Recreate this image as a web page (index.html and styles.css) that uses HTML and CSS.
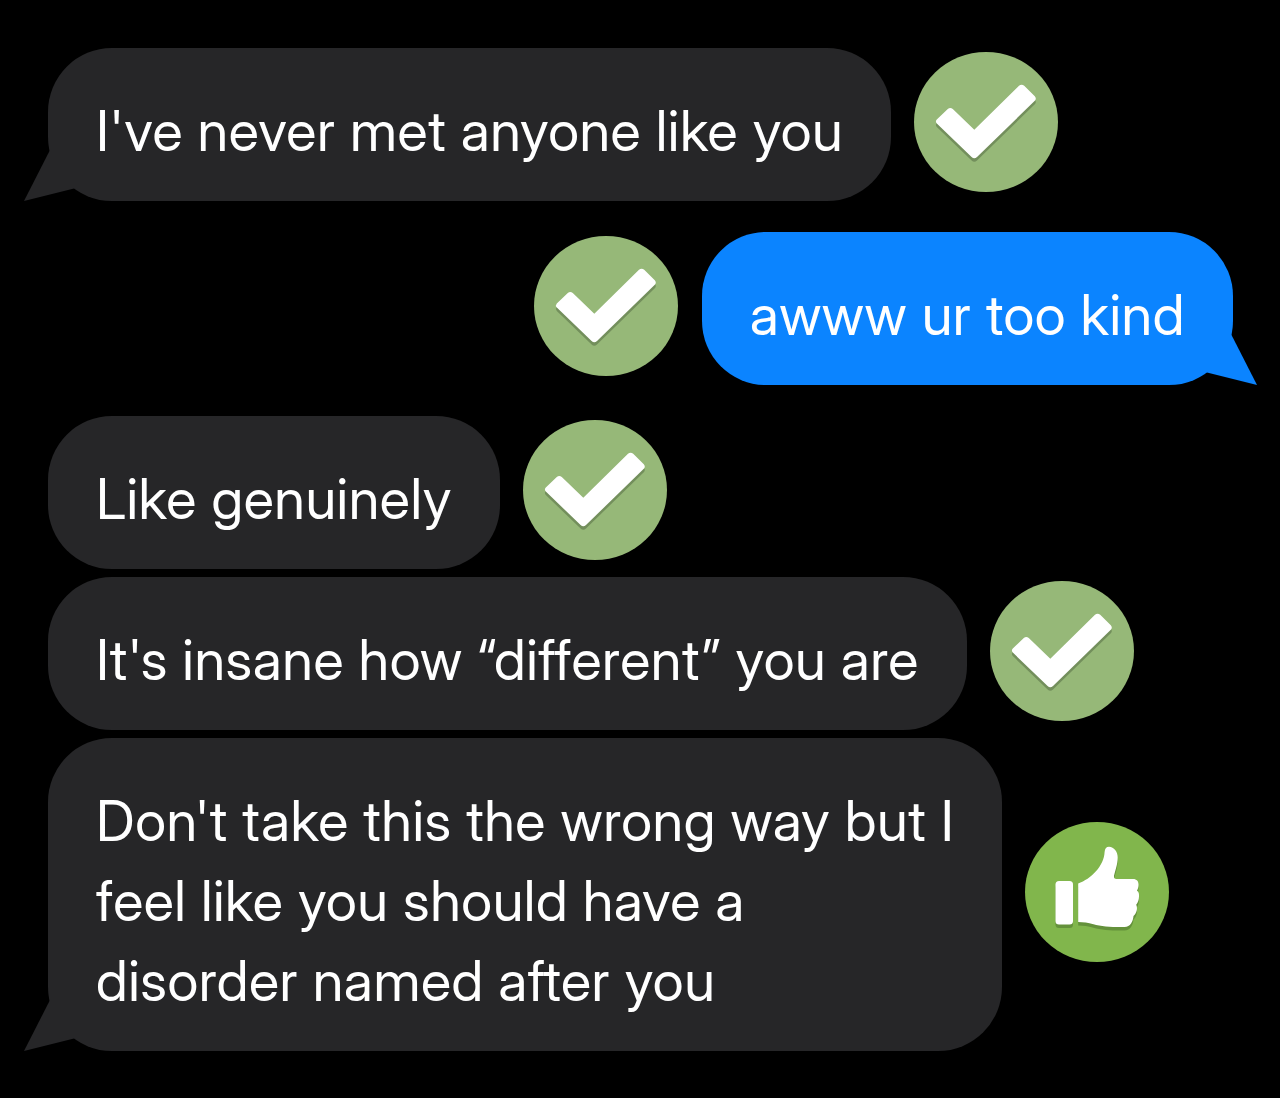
FILE: index.html
```
<!DOCTYPE html>
<html lang="en">
<head>
    <meta charset="UTF-8">
    <title>Messages</title>

    <link rel="stylesheet" href="styles.css">
</head>
<body>
    <!-- shared badge shapes -->
    <svg class="defs" width="0" height="0">
        <symbol id="best" viewBox="0 0 144 140">
            <ellipse cx="72" cy="70" rx="72" ry="70" fill="#96b878"></ellipse>
            <path fill="#738f5c" transform="translate(0,3.5)" d="M22.8,67.6 L33.8,57 Q36.2,55 38.8,57 L60.3,77.8 L105,33.8 Q107.6,31.8 110.2,33.8 L120.8,44.2 Q122.8,46.5 120.8,48.8 L63,105 Q60.3,107.4 57.6,105 L22.8,71.6 Q21,69.6 22.8,67.6Z"></path>
            <path fill="#fff" d="M22.8,67.6 L33.8,57 Q36.2,55 38.8,57 L60.3,77.8 L105,33.8 Q107.6,31.8 110.2,33.8 L120.8,44.2 Q122.8,46.5 120.8,48.8 L63,105 Q60.3,107.4 57.6,105 L22.8,71.6 Q21,69.6 22.8,67.6Z"></path>
        </symbol>
        <symbol id="excellent" viewBox="0 0 144 140">
            <ellipse cx="72" cy="70" rx="72" ry="70" fill="#81b64c"></ellipse>
            <g fill="#64913b" transform="translate(0,3.5)">
                <rect x="30.5" y="59" width="17.5" height="43.5" rx="3.5"></rect>
                <path d="M53.2,61.5 C66,57 79,44 79.6,30 C79.8,26.5 81.5,24.8 84,24.8 C89,25 92.7,29.5 92.7,35.5 C92.7,42 90.2,49 89,53.8 C88.7,56 89.6,57 91.5,57 L108,57 C111.8,57 113.5,59.3 113.5,62.5 C113.5,65 113,66.7 112,68.5 C113.8,70 114.2,71.8 114,74.5 C113.9,78 113,80.5 111.2,82.8 C113,86.5 111.5,91.5 108.5,94 C108,99.5 105.5,104.8 99.5,105 C88,105.2 76,104.5 68.5,102.2 C63,100.8 58.5,100 53.2,100Z"></path>
            </g>
            <g fill="#fff">
                <rect x="30.5" y="59" width="17.5" height="43.5" rx="3.5"></rect>
                <path d="M53.2,61.5 C66,57 79,44 79.6,30 C79.8,26.5 81.5,24.8 84,24.8 C89,25 92.7,29.5 92.7,35.5 C92.7,42 90.2,49 89,53.8 C88.7,56 89.6,57 91.5,57 L108,57 C111.8,57 113.5,59.3 113.5,62.5 C113.5,65 113,66.7 112,68.5 C113.8,70 114.2,71.8 114,74.5 C113.9,78 113,80.5 111.2,82.8 C113,86.5 111.5,91.5 108.5,94 C108,99.5 105.5,104.8 99.5,105 C88,105.2 76,104.5 68.5,102.2 C63,100.8 58.5,100 53.2,100Z"></path>
            </g>
        </symbol>
    </svg>

    <div class="chat">
        <div class="group">
            <div class="row">
                <div class="bubble tail">I've never met anyone like you</div>
                <svg class="badge"><use href="#best"></use></svg>
            </div>
        </div>
        <div class="group">
            <div class="row sent">
                <div class="bubble tail">awww ur too kind</div>
                <svg class="badge"><use href="#best"></use></svg>
            </div>
        </div>
        <div class="group">
            <div class="row">
                <div class="bubble">Like genuinely</div>
                <svg class="badge"><use href="#best"></use></svg>
            </div>
            <div class="row">
                <div class="bubble">It's insane how “different” you are</div>
                <svg class="badge"><use href="#best"></use></svg>
            </div>
            <div class="row">
                <div class="bubble tail">Don't take this the wrong way but I<br>feel like you should have a<br>disorder named after you</div>
                <svg class="badge"><use href="#excellent"></use></svg>
            </div>
        </div>
    </div>
</body>
</html>
```
FILE: styles.css
```
body {
    margin: 0;

    background: #000;
}

.defs {
    display: block;
}

.chat {
    display: flex;
    flex-direction: column;
    gap: 31px;

    padding: 48px 47px 47px 48px;

    color: #fff;
    font-family: "Inter Display", Inter, "Liberation Sans", sans-serif;
    font-size: 56px;
    line-height: 80px;
    letter-spacing: 0.55px;
}

.group {
    display: flex;
    flex-direction: column;
    gap: 8px;
}

.row {
    display: flex;
    align-items: center;
    gap: 23px;
}

.sent {
    flex-direction: row-reverse;
    gap: 24px;
}

.bubble {
    position: relative;

    padding: 43px 48px 30px;

    background: #262628;
    border-radius: 64px;

    white-space: nowrap;
}

.sent .bubble {
    background: #0b84ff;
}

.tail:before {
    content: '';
    position: absolute;
    left: -24px;
    bottom: 0;
    width: 52px;
    height: 54px;

    background: inherit;
    clip-path: polygon(0 100%, 26px 3px, 52px 3px, 52px 41px);
}

.sent .tail:before {
    left: auto;
    right: -24px;
    transform: scaleX(-1);
}

.badge {
    flex: none;
    width: 144px;
    height: 140px;
    margin-bottom: 5px;
}
```
